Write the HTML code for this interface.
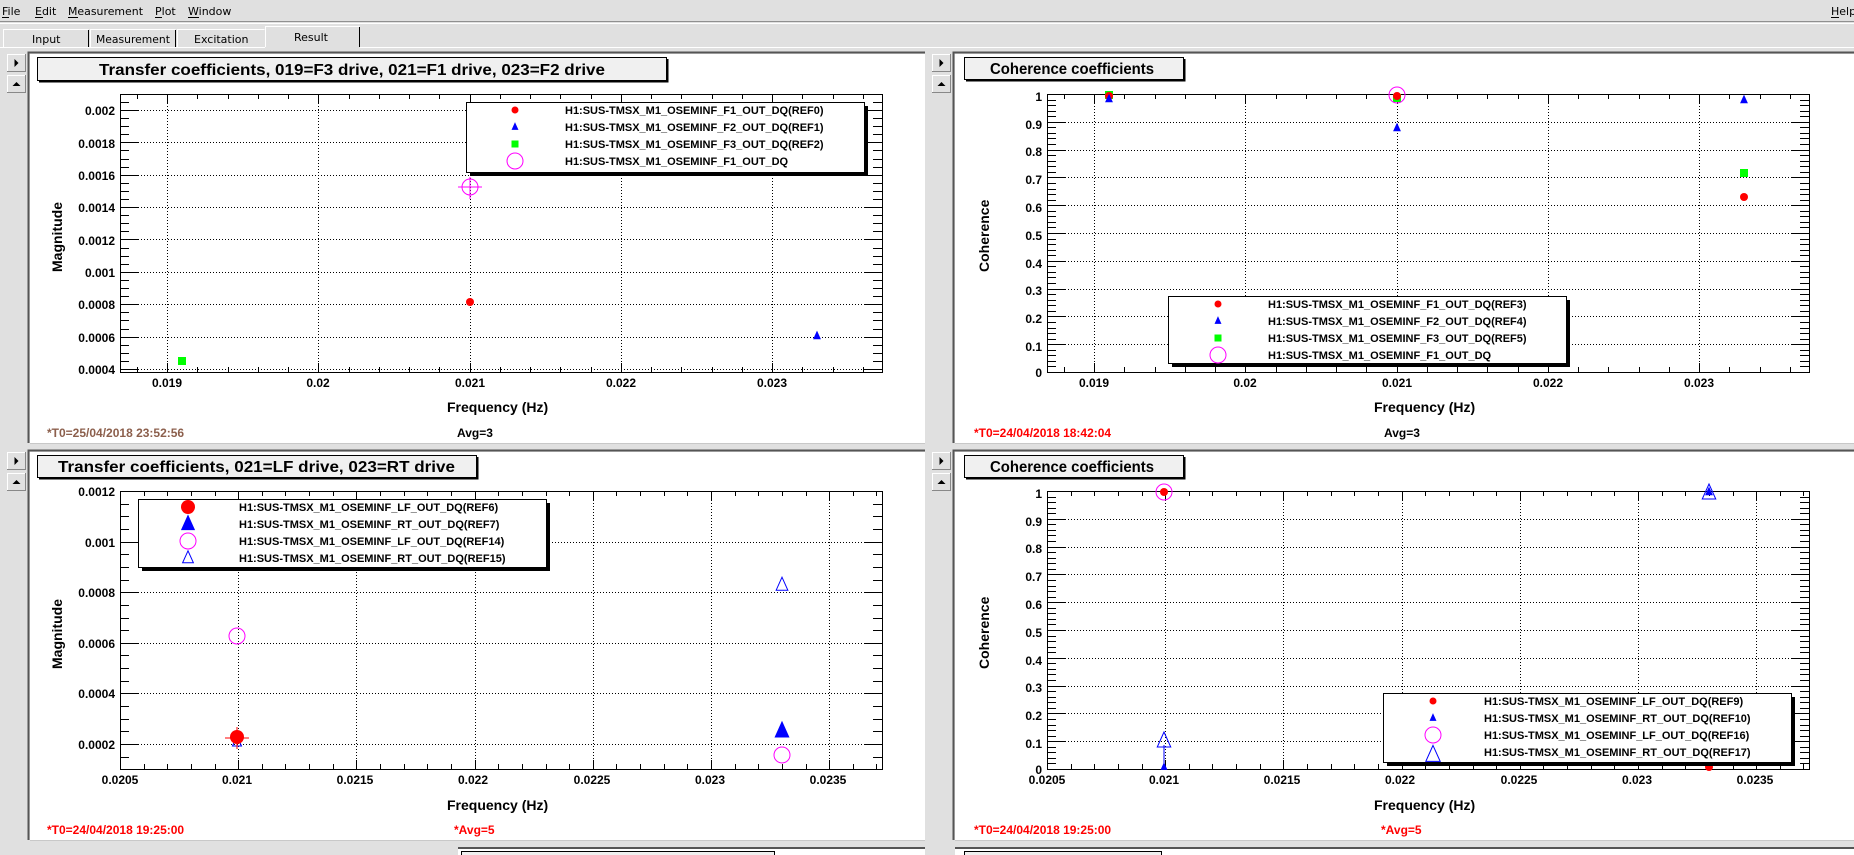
<!DOCTYPE html>
<html><head><meta charset="utf-8"><style>
html,body{margin:0;padding:0;width:1854px;height:855px;overflow:hidden;background:#e0e0e0}
svg{display:block}
.m{font-family:"DejaVu Sans","Liberation Sans",sans-serif;font-size:11px;fill:#000}
.t{font-family:"Liberation Sans",sans-serif;font-weight:bold;fill:#000}
</style></head><body>
<svg id="s" width="1854" height="855" xmlns="http://www.w3.org/2000/svg">
<rect width="1854" height="855" fill="#e0e0e0"/>
<text class="m" x="2" y="15">File</text><text class="m" x="35" y="15">Edit</text><text class="m" x="68" y="15" textLength="75" lengthAdjust="spacingAndGlyphs">Measurement</text><text class="m" x="155" y="15">Plot</text><text class="m" x="188" y="15">Window</text>
<text class="m" x="1831" y="15">Help</text>
<g stroke="#000" stroke-width="1"><line x1="2" y1="17.5" x2="9" y2="17.5"/><line x1="35" y1="17.5" x2="43" y2="17.5"/><line x1="68" y1="17.5" x2="78" y2="17.5"/><line x1="155" y1="17.5" x2="162" y2="17.5"/><line x1="188" y1="17.5" x2="199" y2="17.5"/><line x1="1831" y1="17.5" x2="1839" y2="17.5"/></g>
<line x1="0" y1="21.5" x2="1854" y2="21.5" stroke="#909090"/>
<line x1="0" y1="23.5" x2="1854" y2="23.5" stroke="#ffffff"/>
<g stroke-width="1">
<path d="M3.5 47V29.5H88.5" stroke="#fff" fill="none"/><line x1="88.5" y1="30" x2="88.5" y2="47" stroke="#000"/>
<path d="M90.5 47V29.5H175.5" stroke="#fff" fill="none"/><line x1="175.5" y1="30" x2="175.5" y2="47" stroke="#000"/>
<path d="M177.5 47V29.5H264.5" stroke="#fff" fill="none"/>
<path d="M265.5 47V26.5H359.5" stroke="#fff" fill="none"/><line x1="359.5" y1="27" x2="359.5" y2="47" stroke="#000"/>
</g>
<text class="m" x="32" y="43">Input</text><text class="m" x="96" y="43" textLength="74" lengthAdjust="spacingAndGlyphs">Measurement</text><text class="m" x="194" y="43">Excitation</text><text class="m" x="294" y="41">Result</text>
<line x1="0" y1="47.5" x2="265" y2="47.5" stroke="#fff"/><line x1="360" y1="47.5" x2="1854" y2="47.5" stroke="#fff"/>
<g id="panels"></g>
<g id="titles"></g>
<text class="t" x="99" y="75" font-size="16" textLength="506" lengthAdjust="spacingAndGlyphs">Transfer coefficients, 019=F3 drive, 021=F1 drive, 023=F2 drive</text>
<text class="t" x="990" y="74" font-size="16" textLength="164" lengthAdjust="spacingAndGlyphs">Coherence coefficients</text>
<text class="t" x="58" y="472" font-size="16" textLength="397" lengthAdjust="spacingAndGlyphs">Transfer coefficients, 021=LF drive, 023=RT drive</text>
<text class="t" x="990" y="472" font-size="16" textLength="164" lengthAdjust="spacingAndGlyphs">Coherence coefficients</text>
<g class="t" font-size="14">
<text x="447" y="412">Frequency (Hz)</text><text x="1374" y="412">Frequency (Hz)</text>
<text x="447" y="810">Frequency (Hz)</text><text x="1374" y="810">Frequency (Hz)</text>
<text transform="translate(62,272) rotate(-90)">Magnitude</text>
<text transform="translate(989,272) rotate(-90)">Coherence</text>
<text transform="translate(62,669) rotate(-90)">Magnitude</text>
<text transform="translate(989,669) rotate(-90)">Coherence</text>
</g>
<g class="t" font-size="12" text-anchor="end">
<text x="115" y="115">0.002</text><text x="115" y="148">0.0018</text><text x="115" y="180">0.0016</text><text x="115" y="212">0.0014</text><text x="115" y="245">0.0012</text><text x="115" y="277">0.001</text><text x="115" y="309">0.0008</text><text x="115" y="342">0.0006</text><text x="115" y="374">0.0004</text>
<text x="1042" y="101">1</text><text x="1042" y="129">0.9</text><text x="1042" y="156">0.8</text><text x="1042" y="184">0.7</text><text x="1042" y="212">0.6</text><text x="1042" y="240">0.5</text><text x="1042" y="268">0.4</text><text x="1042" y="295">0.3</text><text x="1042" y="323">0.2</text><text x="1042" y="351">0.1</text><text x="1042" y="377">0</text>
<text x="115" y="496">0.0012</text><text x="115" y="547">0.001</text><text x="115" y="597">0.0008</text><text x="115" y="648">0.0006</text><text x="115" y="698">0.0004</text><text x="115" y="749">0.0002</text>
<text x="1042" y="498">1</text><text x="1042" y="526">0.9</text><text x="1042" y="553">0.8</text><text x="1042" y="581">0.7</text><text x="1042" y="609">0.6</text><text x="1042" y="637">0.5</text><text x="1042" y="665">0.4</text><text x="1042" y="692">0.3</text><text x="1042" y="720">0.2</text><text x="1042" y="748">0.1</text><text x="1042" y="774">0</text>
</g>
<g class="t" font-size="12" text-anchor="middle">
<text x="167" y="387">0.019</text><text x="318" y="387">0.02</text><text x="470" y="387">0.021</text><text x="621" y="387">0.022</text><text x="772" y="387">0.023</text>
<text x="1094" y="387">0.019</text><text x="1245" y="387">0.02</text><text x="1397" y="387">0.021</text><text x="1548" y="387">0.022</text><text x="1699" y="387">0.023</text>
<text x="120" y="784">0.0205</text><text x="237" y="784">0.021</text><text x="355" y="784">0.0215</text><text x="473" y="784">0.022</text><text x="592" y="784">0.0225</text><text x="710" y="784">0.023</text><text x="828" y="784">0.0235</text>
<text x="1047" y="784">0.0205</text><text x="1164" y="784">0.021</text><text x="1282" y="784">0.0215</text><text x="1400" y="784">0.022</text><text x="1519" y="784">0.0225</text><text x="1637" y="784">0.023</text><text x="1755" y="784">0.0235</text>
</g>
<g class="t" font-size="12">
<text x="47" y="437" fill="#8c5f4c">*T0=25/04/2018 23:52:56</text><text x="457" y="437">Avg=3</text>
<text x="974" y="437" fill="#ff0000">*T0=24/04/2018 18:42:04</text><text x="1384" y="437">Avg=3</text>
<text x="47" y="834" fill="#ff0000">*T0=24/04/2018 19:25:00</text><text x="454" y="834" fill="#ff0000">*Avg=5</text>
<text x="974" y="834" fill="#ff0000">*T0=24/04/2018 19:25:00</text><text x="1381" y="834" fill="#ff0000">*Avg=5</text>
</g>
<g id="marks"></g>
<g id="legends"></g>
</svg>
<script>
var NS="http://www.w3.org/2000/svg";
function el(p,t,a){var e=document.createElementNS(NS,t);for(var k in a)e.setAttribute(k,a[k]);p.appendChild(e);return e;}
var P=document.getElementById('panels'),T=document.getElementById('titles'),M=document.getElementById('marks'),L=document.getElementById('legends');
[[30,54,925,443],[955,54,1854,443],[30,452,925,840],[955,452,1854,840]].forEach(function(r){
 el(P,'rect',{x:r[0],y:r[1],width:r[2]-r[0],height:r[3]-r[1],fill:'#fff'});
 el(P,'path',{d:'M'+(r[0]-1.5)+' '+r[3]+'V'+(r[1]-1.5)+'H'+r[2],stroke:'#555',fill:'none','stroke-width':2});
 el(P,'line',{x1:r[0],y1:r[3]+0.5,x2:r[2],y2:r[3]+0.5,stroke:'#c8c8c8'});
 var bx=r[0]-23;
 [[r[1],r[1]+17,'tr'],[r[1]+21,r[1]+38,'up']].forEach(function(b){
  el(P,'rect',{x:bx+0.5,y:b[0]+0.5,width:18,height:17,fill:'#e0e0e0',stroke:'#888'});
  el(P,'path',{d:'M'+(bx+0.5)+' '+(b[1])+'V'+(b[0]+0.5)+'H'+(bx+18),stroke:'#fff',fill:'none'});
  var cx=bx+9.5,cy=(b[0]+b[1])/2+0.5;
  if(b[2]=='tr')el(P,'path',{d:'M'+(cx-2)+' '+(cy-4)+'L'+(cx+2)+' '+cy+'L'+(cx-2)+' '+(cy+4)+'Z',fill:'#000'});
  else el(P,'path',{d:'M'+(cx-4)+' '+(cy+2)+'L'+cx+' '+(cy-2)+'L'+(cx+4)+' '+(cy+2)+'Z',fill:'#000'});
 });
});
el(P,'rect',{x:458,y:848,width:467,height:7,fill:'#fff'});
el(P,'rect',{x:955,y:848,width:899,height:7,fill:'#fff'});
el(P,'line',{x1:458,y1:848,x2:925,y2:848,stroke:'#555','stroke-width':2});
el(P,'line',{x1:955,y1:848,x2:1854,y2:848,stroke:'#555','stroke-width':2});
el(P,'rect',{x:461.5,y:851.5,width:313,height:10,fill:'#f0f0f0',stroke:'#000'});
el(P,'rect',{x:964.5,y:851.5,width:197,height:10,fill:'#f0f0f0',stroke:'#000'});
[[37,57,666,80],[964,57,1183,79],[37,455,476,477],[964,455,1183,477]].forEach(function(r){
 el(T,'rect',{x:r[0]+0.5,y:r[1]+0.5,width:r[2]-r[0],height:r[3]-r[1],fill:'#f0f0f0',stroke:'#000'});
 el(T,'path',{d:'M'+(r[0]+2)+' '+(r[3]+1.5)+'H'+(r[2]+1.5)+'V'+(r[1]+2),stroke:'#000','stroke-width':2,fill:'none'});
});
function frame(x0,y0,x1,y1,xs,ys){
 var g=el(P,'g',{});
 xs.forEach(function(t){var x=Math.round(t[0])+0.5;if(x<x0||x>x1+1)return;var len=t[1]?9:5;
  if(t[1]&&x>x0+1&&x<x1-1)el(g,'line',{x1:x,y1:y0,x2:x,y2:y1,stroke:'#000','stroke-dasharray':'1,2'});
  el(g,'line',{x1:x,y1:y1,x2:x,y2:y1-len,stroke:'#000'});el(g,'line',{x1:x,y1:y0,x2:x,y2:y0+len,stroke:'#000'});});
 ys.forEach(function(t){var y=Math.round(t[0])+0.5;if(y<y0||y>y1+1)return;var len=t[1]?18:9;
  if(t[1]&&y>y0+1&&y<y1-1)el(g,'line',{x1:x0,y1:y,x2:x1,y2:y,stroke:'#000','stroke-dasharray':'1,2'});
  el(g,'line',{x1:x0,y1:y,x2:x0+len,y2:y,stroke:'#000'});el(g,'line',{x1:x1,y1:y,x2:x1-len,y2:y,stroke:'#000'});});
 el(g,'rect',{x:x0+0.5,y:y0+0.5,width:x1-x0,height:y1-y0,fill:'none',stroke:'#000'});
}
function rng(a,b,st,maj,f){var r=[];for(var i=0;;i++){var v=a+i*st;if(v>b+1e-12)break;r.push([f(v),Math.abs(Math.round((v-maj[0])/maj[1])*maj[1]+maj[0]-v)<1e-9]);}return r;}
function xA(off){return rng(0.0188,0.02365,0.0002,[0.019,0.001],function(v){return off+167+(v-0.019)*151300;});}
function xB(off){return rng(0.0205,0.0237,0.0001,[0.0205,0.0005],function(v){return off+120+(v-0.0205)*236400;});}
var y1=rng(0.0004,0.0021,0.00005,[0.0004,0.0002],function(v){return 369-(v-0.0004)*161900;});
var yc1=rng(0,1,0.02,[0,0.1],function(v){return 372-v*278;});
var y3=rng(0.0001,0.0012,0.00005,[0.0002,0.0002],function(v){return 744-(v-0.0002)*253000;});
var yc2=rng(0,1,0.02,[0,0.1],function(v){return 769-v*278;});
frame(120,94,882,372,xA(0),y1);
frame(1047,94,1809,372,xA(927),yc1);
frame(120,491,882,769,xB(0),y3);
frame(1047,491,1809,769,xB(927),yc2);
function dot(g,x,y,r,c){el(g,'circle',{cx:x,cy:y,r:r,fill:c});}
function oc(g,x,y,r,c){el(g,'circle',{cx:x,cy:y,r:r,fill:'none',stroke:c});}
function tri(g,x,y,s,c,open){el(g,'path',{d:'M'+x+' '+(y-s*0.6)+'L'+(x+s*0.45)+' '+(y+s*0.4)+'L'+(x-s*0.45)+' '+(y+s*0.4)+'Z',fill:open?'none':c,stroke:c});}
function sq(g,x,y,s,c){el(g,'rect',{x:x-s/2,y:y-s/2,width:s,height:s,fill:c});}
function ln(g,a,b,c,d,col){el(g,'line',{x1:a,y1:b,x2:c,y2:d,stroke:col});}
dot(M,470,302,4,'#f00');tri(M,817,336,7,'#00f');sq(M,182,361,8,'#0f0');
oc(M,470,187,8,'#f0f');ln(M,470,177,470,199,'#f0f');ln(M,458,187,482,187,'#f0f');
sq(M,1109,95,8,'#0f0');dot(M,1109,96,4,'#f00');tri(M,1109,99,7,'#00f');
sq(M,1397,98,8,'#0f0');dot(M,1397,96,4,'#f00');oc(M,1397,95,8,'#f0f');tri(M,1397,128,7,'#00f');
tri(M,1744,100,7,'#00f');sq(M,1744,173,8,'#0f0');dot(M,1744,197,4,'#f00');
tri(M,237,742,10,'#00f',true);ln(M,237,727,237,749,'#f00');ln(M,225,738,249,738,'#f00');dot(M,237,737,7,'#f00');
oc(M,237,636,8,'#f0f');tri(M,782,585,13,'#00f',true);tri(M,782,731,15,'#00f');oc(M,782,755,8,'#f0f');
oc(M,1164,492,8,'#f0f');dot(M,1164,492,4,'#f00');tri(M,1164,741,15,'#00f',true);ln(M,1164,745,1164,769,'#00f');tri(M,1164,767,6,'#00f');
tri(M,1709,493,15,'#00f',true);tri(M,1709,492,7,'#00f');dot(M,1709,767,4,'#f00');
function leg(x0,y0,x1,y1,mx,tx,rows){
 el(L,'rect',{x:x0+4,y:y0+4,width:x1-x0,height:y1-y0,fill:'#000'});
 el(L,'rect',{x:x0+0.5,y:y0+0.5,width:x1-x0,height:y1-y0,fill:'#fff',stroke:'#000'});
 rows.forEach(function(r,i){var y=y0+8+i*17;r[0](y);
  var t=el(L,'text',{x:tx,y:y+4,'class':'t','font-size':'11'});t.textContent=r[1];});
}
leg(466,102,864,172,515,565,[
 [function(y){dot(L,515,y,3.5,'#f00')},'H1:SUS-TMSX_M1_OSEMINF_F1_OUT_DQ(REF0)'],
 [function(y){tri(L,515,y,6,'#00f')},'H1:SUS-TMSX_M1_OSEMINF_F2_OUT_DQ(REF1)'],
 [function(y){sq(L,515,y,7,'#0f0')},'H1:SUS-TMSX_M1_OSEMINF_F3_OUT_DQ(REF2)'],
 [function(y){oc(L,515,y,8,'#f0f')},'H1:SUS-TMSX_M1_OSEMINF_F1_OUT_DQ']]);
leg(1168,296,1566,363,1218,1268,[
 [function(y){dot(L,1218,y,3.5,'#f00')},'H1:SUS-TMSX_M1_OSEMINF_F1_OUT_DQ(REF3)'],
 [function(y){tri(L,1218,y,6,'#00f')},'H1:SUS-TMSX_M1_OSEMINF_F2_OUT_DQ(REF4)'],
 [function(y){sq(L,1218,y,7,'#0f0')},'H1:SUS-TMSX_M1_OSEMINF_F3_OUT_DQ(REF5)'],
 [function(y){oc(L,1218,y,8,'#f0f')},'H1:SUS-TMSX_M1_OSEMINF_F1_OUT_DQ']]);
leg(138,499,546,567,188,239,[
 [function(y){dot(L,188,y,7,'#f00')},'H1:SUS-TMSX_M1_OSEMINF_LF_OUT_DQ(REF6)'],
 [function(y){tri(L,188,y,14,'#00f')},'H1:SUS-TMSX_M1_OSEMINF_RT_OUT_DQ(REF7)'],
 [function(y){oc(L,188,y,8,'#f0f')},'H1:SUS-TMSX_M1_OSEMINF_LF_OUT_DQ(REF14)'],
 [function(y){tri(L,188,y,12,'#00f',true)},'H1:SUS-TMSX_M1_OSEMINF_RT_OUT_DQ(REF15)']]);
leg(1383,693,1791,762,1433,1484,[
 [function(y){dot(L,1433,y,3.5,'#f00')},'H1:SUS-TMSX_M1_OSEMINF_LF_OUT_DQ(REF9)'],
 [function(y){tri(L,1433,y,6,'#00f')},'H1:SUS-TMSX_M1_OSEMINF_RT_OUT_DQ(REF10)'],
 [function(y){oc(L,1433,y,8,'#f0f')},'H1:SUS-TMSX_M1_OSEMINF_LF_OUT_DQ(REF16)'],
 [function(y){tri(L,1433,y+3,16,'#00f',true)},'H1:SUS-TMSX_M1_OSEMINF_RT_OUT_DQ(REF17)']]);
</script>
</body></html>
